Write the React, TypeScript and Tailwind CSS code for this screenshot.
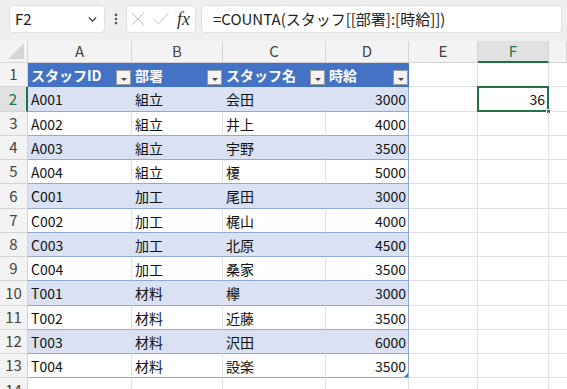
import React from "react";
import { ChevronDown, EllipsisVertical, X, Check } from "lucide-react";

const data: [string, string, string, string][] = [
  ["A001", "組立", "会田", "3000"],
  ["A002", "組立", "井上", "4000"],
  ["A003", "組立", "宇野", "3500"],
  ["A004", "組立", "榎", "5000"],
  ["C001", "加工", "尾田", "3000"],
  ["C002", "加工", "梶山", "4000"],
  ["C003", "加工", "北原", "4500"],
  ["C004", "加工", "桑家", "3500"],
  ["T001", "材料", "欅", "3000"],
  ["T002", "材料", "近藤", "3500"],
  ["T003", "材料", "沢田", "6000"],
  ["T004", "材料", "設楽", "3500"],
];

function Drop() {
  return (
    <div className="absolute right-[1px] bottom-[1px] w-[15px] h-[15px] bg-[#f4f4f4] border border-[#9a9a9a] flex items-end justify-center pb-[3px]">
      <div className="w-0 h-0 border-l-[3px] border-r-[3px] border-t-[3px] border-l-transparent border-r-transparent border-t-[#444]" />
    </div>
  );
}

export default function App() {
  const cols = ["A", "B", "C", "D", "E", "F", ""];
  return (
    <div className="w-[567px] h-[389px] overflow-hidden bg-white font-['Noto_Sans_CJK_JP','Noto_Sans',sans-serif] text-[14px] text-[#111]">
      {/* toolbar */}
      <div className="h-[41px] bg-[#efefef] flex items-start pt-[5px] pl-[9px]">
        <div className="w-[96px] h-[28px] bg-white rounded-[4px] border border-[#e0e0e0] flex items-center justify-between pl-[5px] pr-[5px]">
          <span className="text-[15px] text-[#222]">F2</span>
          <ChevronDown size={13} strokeWidth={2.6} color="#333" />
        </div>
        <div className="w-[21px] h-[28px] flex items-center justify-center">
          <EllipsisVertical size={14} strokeWidth={2.5} color="#555" />
        </div>
        <div className="w-[70px] h-[28px] bg-white rounded-[4px] border border-[#e0e0e0] flex items-center">
          <X size={22} strokeWidth={0.9} color="#b0b0b0" />
          <Check size={22} strokeWidth={0.9} color="#b0b0b0" className="ml-[1px]" />
          <span className="ml-[5px] font-['Liberation_Serif',serif] italic text-[18px] text-[#333] leading-none">fx</span>
        </div>
        <div className="ml-[5px] w-[361px] h-[28px] bg-white rounded-[4px] border border-[#e0e0e0] flex items-center pl-[11px]">
          <span className="text-[15px] text-[#222]">=COUNTA(スタッフ[[部署]:[時給]])</span>
        </div>
      </div>

      {/* sheet */}
      <div className="grid grid-cols-[28px_104px_91px_103px_83px_69px_71px_1fr]">
        {/* column headers */}
        <div className="h-[22px] bg-[#f3f3f3] border-r border-b border-[#d4d4d4] relative">
          <div className="absolute right-[3px] bottom-[3px] w-0 h-0" style={{ borderBottom: "16px solid #d6d6d6", borderLeft: "16px solid transparent" }} />
        </div>
        {cols.map((c, i) =>
          c === "F" ? (
            <div key={i} className="h-[22px] bg-[#e1e1e1] border-r border-[#d4d4d4] border-b-2 border-b-[#217346] flex items-center justify-center text-[#217346] text-[15px]">
              {c}
            </div>
          ) : (
            <div key={i} className="h-[22px] bg-[#f3f3f3] border-r border-b border-[#d4d4d4] flex items-center justify-center text-[#444] text-[15px]">
              {c}
            </div>
          )
        )}

        {/* row 1 */}
        <div className="h-[24.25px] bg-[#f3f3f3] border-r border-b border-[#d4d4d4] flex items-center justify-center text-[#444] text-[15px]">1</div>
        {["スタッフID", "部署", "スタッフ名", "時給"].map((h) => (
          <div key={h} className="h-[24.25px] bg-[#4472c4] border-b border-[#4472c4] relative flex items-center pl-[3px] pt-[1px] text-white font-bold">
            {h}
            <Drop />
          </div>
        ))}
        <div className="h-[24.25px] border-r border-b border-[#e1e1e1]" />
        <div className="h-[24.25px] border-r border-b border-[#e1e1e1]" />
        <div className="h-[24.25px] border-b border-[#e1e1e1]" />

        {data.map((row, r) => {
          const banded = r % 2 === 0;
          const sel = r === 0;
          return (
            <React.Fragment key={r}>
              {sel ? (
                <div className="h-[24.25px] bg-[#e1e1e1] border-r-2 border-r-[#217346] border-b border-b-[#d4d4d4] flex items-center justify-center text-[#217346] text-[15px]">
                  {r + 2}
                </div>
              ) : (
                <div className="h-[24.25px] bg-[#f3f3f3] border-r border-b border-[#d4d4d4] flex items-center justify-center text-[#444] text-[15px]">
                  {r + 2}
                </div>
              )}
              {row.map((v, c) => {
                const last = c === 3;
                const cls = banded
                  ? last
                    ? "bg-[#d9e1f2] border-r border-r-[#8ea9db]"
                    : "bg-[#d9e1f2] border-r border-r-[#d9e1f2]"
                  : last
                  ? "bg-white border-r border-r-[#8ea9db]"
                  : "bg-white border-r border-r-[#e1e1e1]";
                return (
                  <div
                    key={c}
                    className={`h-[24.25px] border-b border-b-[#8ea9db] flex items-center pt-[2px] relative ${cls} ${last ? "justify-end pr-[2px]" : "pl-[3px]"}`}
                  >
                    {v}
                    {last && r === 11 && (
                      <div className="absolute right-0 bottom-0 w-0 h-0" style={{ borderBottom: "4px solid #4472c4", borderLeft: "4px solid transparent" }} />
                    )}
                  </div>
                );
              })}
              <div className="h-[24.25px] border-r border-b border-[#e1e1e1]" />
              <div className="h-[24.25px] border-r border-b border-[#e1e1e1] relative flex items-center justify-end pr-[3px] pt-[2px]">
                {sel && (
                  <>
                    36
                    <div className="absolute left-[-1px] top-[-1px] right-[-1px] bottom-[-1px] border-2 border-[#217346]" />
                    <div className="absolute right-[-3px] bottom-[-3px] w-[5px] h-[5px] bg-[#217346] border border-white" />
                  </>
                )}
              </div>
              <div className="h-[24.25px] border-b border-[#e1e1e1]" />
            </React.Fragment>
          );
        })}

        {/* row 14 */}
        <div className="h-[24px] bg-[#f3f3f3] border-r border-[#d4d4d4] flex items-center justify-center text-[#444] text-[15px]">14</div>
        <div className="h-[24px] border-r border-[#e1e1e1]" />
        <div className="h-[24px] border-r border-[#e1e1e1]" />
        <div className="h-[24px] border-r border-[#e1e1e1]" />
        <div className="h-[24px] border-r border-[#e1e1e1]" />
        <div className="h-[24px] border-r border-[#e1e1e1]" />
        <div className="h-[24px] border-r border-[#e1e1e1]" />
        <div className="h-[24px]" />
      </div>
    </div>
  );
}
